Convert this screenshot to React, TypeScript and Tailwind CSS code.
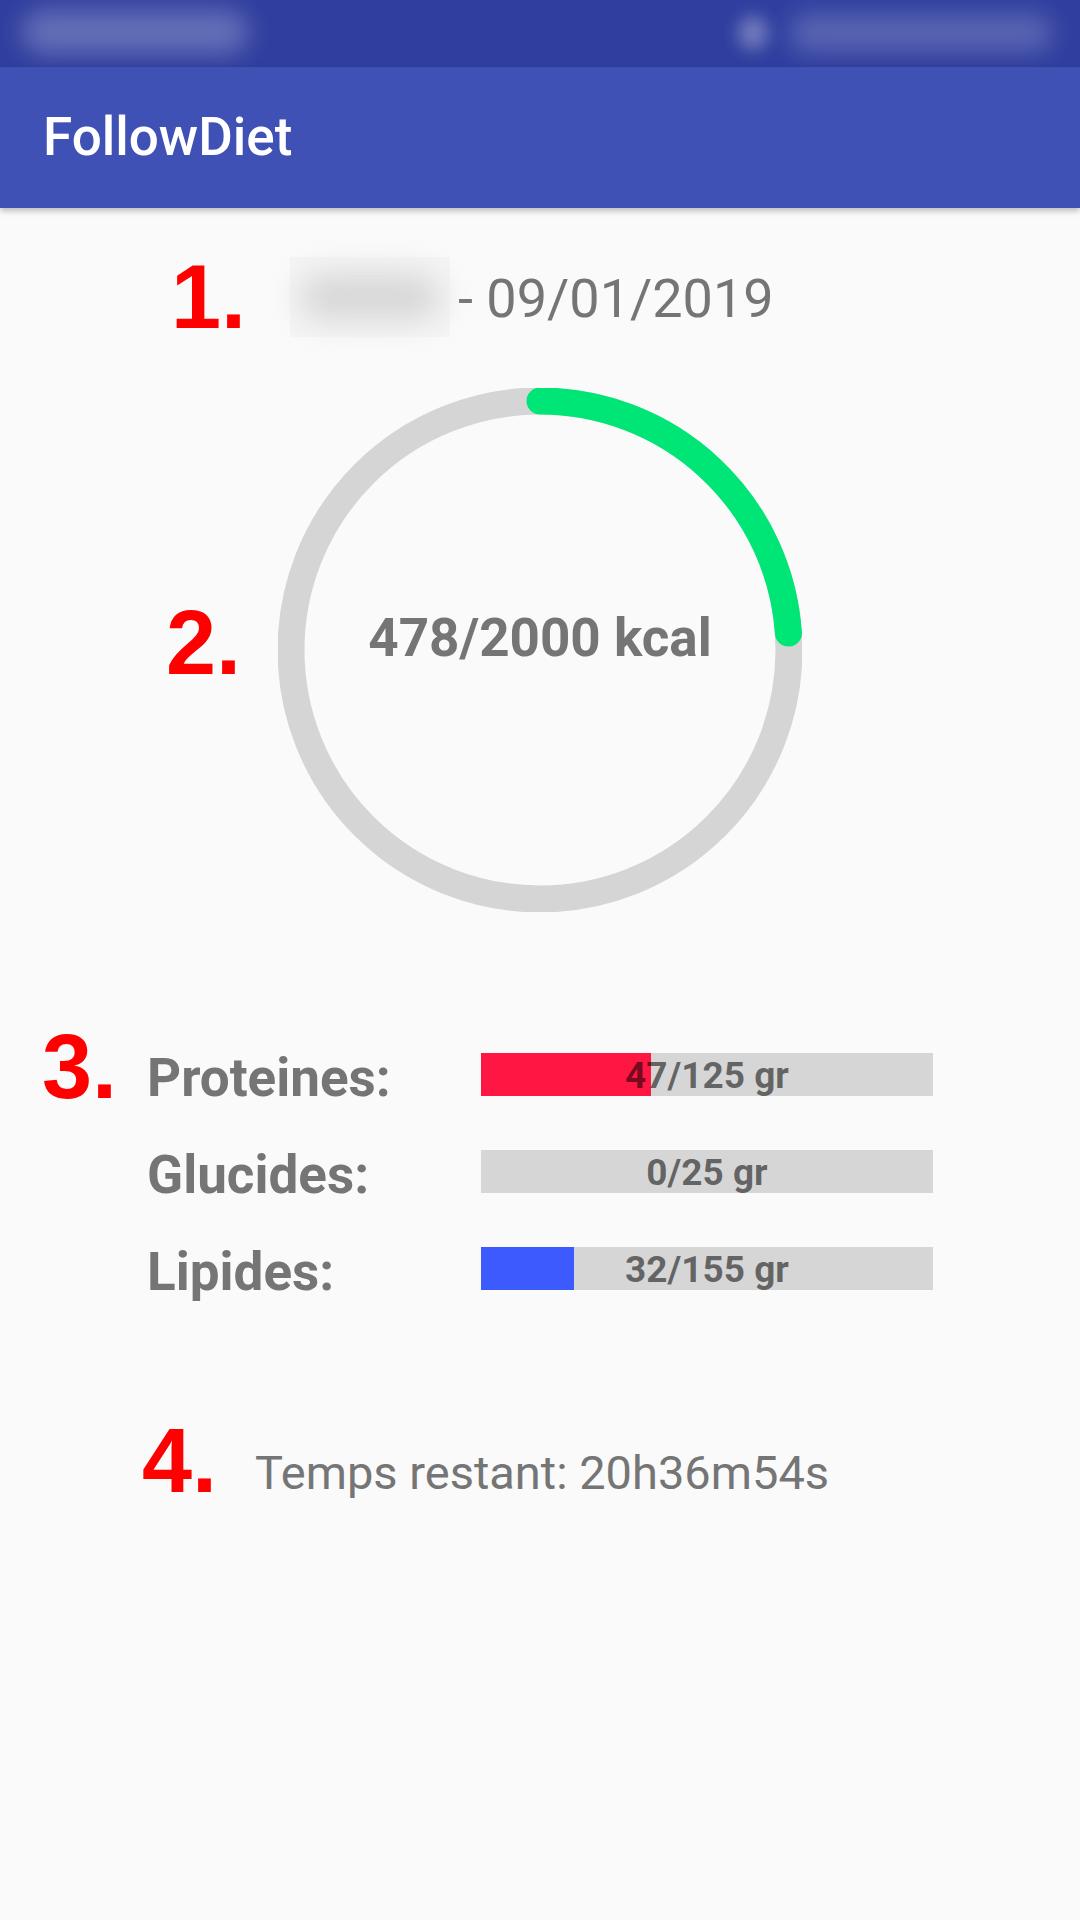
const font = { fontFamily: "Roboto, 'Noto Sans', sans-serif" };

const Mark = ({ n, className }: { n: string; className: string }) => (
  <span
    className={`absolute font-bold leading-none text-[#ff0000] ${className}`}
    style={{ fontFamily: "'Liberation Sans', Arial, sans-serif" }}
  >
    {n}
  </span>
);

const CalorieRing = ({ value, goal }: { value: number; goal: number }) => {
  const r = 249;
  const c = 2 * Math.PI * r;
  const part = Math.min(value / goal, 1) * c;
  return (
    <div className="relative w-[524px] h-[524px]">
      <svg width="524" height="524" viewBox="0 0 524 524">
        <circle cx="262" cy="262" r={r} fill="none" stroke="#d5d5d5" strokeWidth="27" />
        <circle
          cx="262"
          cy="262"
          r={r}
          fill="none"
          stroke="#00e676"
          strokeWidth="27"
          strokeLinecap="round"
          strokeDasharray={`${part} ${c}`}
          transform="rotate(-90 262 262)"
        />
      </svg>
      <div className="absolute inset-0 flex items-center justify-center pb-[22px]">
        <span className="text-[53px] font-bold text-[#757575]">
          {value}/{goal} kcal
        </span>
      </div>
    </div>
  );
};

const MacroRow = ({
  label,
  value,
  goal,
  color,
}: {
  label: string;
  value: number;
  goal: number;
  color: string;
}) => (
  <div className="flex items-center h-[97px]">
    <div className="w-[334px] pl-[147px] pt-[10px] text-[53px] font-bold text-[#757575] leading-none box-content">
      {label}
    </div>
    <div className="relative w-[452px] h-[43px] bg-[#d6d6d6] mt-[2px]">
      <div className="absolute inset-y-0 left-0" style={{ width: `${(value / goal) * 100}%`, background: color }} />
      <div className="absolute inset-0 flex items-center justify-center text-[37px] font-bold text-black/55 leading-none pt-[2px]">
        {value}/{goal} gr
      </div>
    </div>
  </div>
);

export default function App() {
  return (
    <div className="w-[1080px] h-[1920px] bg-[#fafafa] overflow-hidden" style={font}>
      <div className="relative h-[67px] bg-[#303f9f] overflow-hidden">
        <div className="absolute left-[22px] top-[10px] w-[226px] h-[44px] rounded-full bg-white/25 blur-md" />
        <div className="absolute left-[738px] top-[16px] w-[30px] h-[34px] rounded-full bg-white/30 blur-sm" />
        <div className="absolute left-[790px] top-[14px] w-[262px] h-[38px] rounded-full bg-white/20 blur-md" />
      </div>
      <div className="relative z-10 h-[141px] bg-[#3f51b5] flex items-center pl-[43px] shadow-[0_3px_6px_rgba(0,0,0,0.25)]">
        <span className="text-[53px] font-medium text-white">FollowDiet</span>
      </div>

      <div className="relative">
        <Mark n="1." className="left-[171px] top-[44px] text-[90px]" />
        <Mark n="2." className="left-[166px] top-[390px] text-[90px]" />
        <Mark n="3." className="left-[42px] top-[814px] text-[90px]" />
        <Mark n="4." className="left-[142px] top-[1208px] text-[90px]" />

        <div className="flex items-center pt-[49px] h-[129px] box-border">
          <div className="ml-[290px] w-[160px] h-[80px] bg-[#f5f5f5] flex items-center justify-center">
            <div className="w-[140px] h-[44px] rounded-full bg-[#d5d5d5] blur-lg" />
          </div>
          <span className="ml-[8px] mt-[4px] text-[54px] text-[#757575] leading-none">- 09/01/2019</span>
        </div>

        <div className="flex justify-center mt-[51px]">
          <CalorieRing value={478} goal={2000} />
        </div>

        <div className="mt-[113px] flex flex-col">
          <MacroRow label="Proteines:" value={47} goal={125} color="#ff1744" />
          <MacroRow label="Glucides:" value={0} goal={25} color="#ff1744" />
          <MacroRow label="Lipides:" value={32} goal={155} color="#3d5afe" />
        </div>

        <div className="mt-[124px] pl-[255px] text-[47px] text-[#757575] leading-[65px]">
          Temps restant: 20h36m54s
        </div>
      </div>
    </div>
  );
}
